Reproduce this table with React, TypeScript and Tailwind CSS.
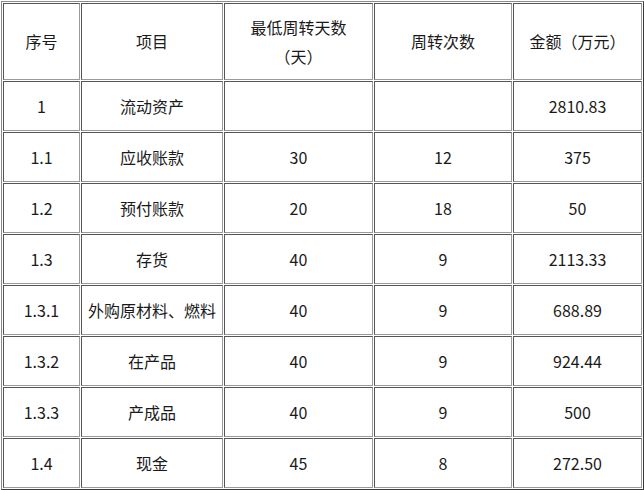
import React from 'react';

const rows: string[][] = [
  ['1', '流动资产', '', '', '2810.83'],
  ['1.1', '应收账款', '30', '12', '375'],
  ['1.2', '预付账款', '20', '18', '50'],
  ['1.3', '存货', '40', '9', '2113.33'],
  ['1.3.1', '外购原材料、燃料', '40', '9', '688.89'],
  ['1.3.2', '在产品', '40', '9', '924.44'],
  ['1.3.3', '产成品', '40', '9', '500'],
  ['1.4', '现金', '45', '8', '272.50'],
];

const cell =
  'border border-t-[#555] border-l-[#555] border-b-[#9a9a9a] border-r-[#9a9a9a] px-1 text-center align-middle font-normal';

const App: React.FC = () => (
  <div className="w-[644px] h-[490px] overflow-hidden bg-white pt-px pl-px">
    <table
      className="w-[643px] table-fixed border-separate border-spacing-[1px] border border-t-[#8a8a8a] border-l-[#8a8a8a] border-b-[#3a3a3a] border-r-[#3a3a3a] text-[16px] leading-[29px] text-[#1a1a1a]"
      style={{ fontFamily: '"Noto Sans CJK SC", "Noto Sans", sans-serif' }}
    >
      <thead>
        <tr>
          <th className={`${cell} w-[77px] h-[77px]`}>序号</th>
          <th className={`${cell} w-[142px]`}>项目</th>
          <th className={`${cell} w-[149px]`}>
            最低周转天数
            <br />
            （天）
          </th>
          <th className={`${cell} w-[138px]`}>周转次数</th>
          <th className={`${cell} w-[129px]`}>金额（万元）</th>
        </tr>
      </thead>
      <tbody>
        {rows.map((r) => (
          <tr key={r[0]}>
            {r.map((v, i) => (
              <td key={i} className={`${cell} h-[50px] whitespace-nowrap`}>
                {v}
              </td>
            ))}
          </tr>
        ))}
      </tbody>
    </table>
  </div>
);

export default App;
